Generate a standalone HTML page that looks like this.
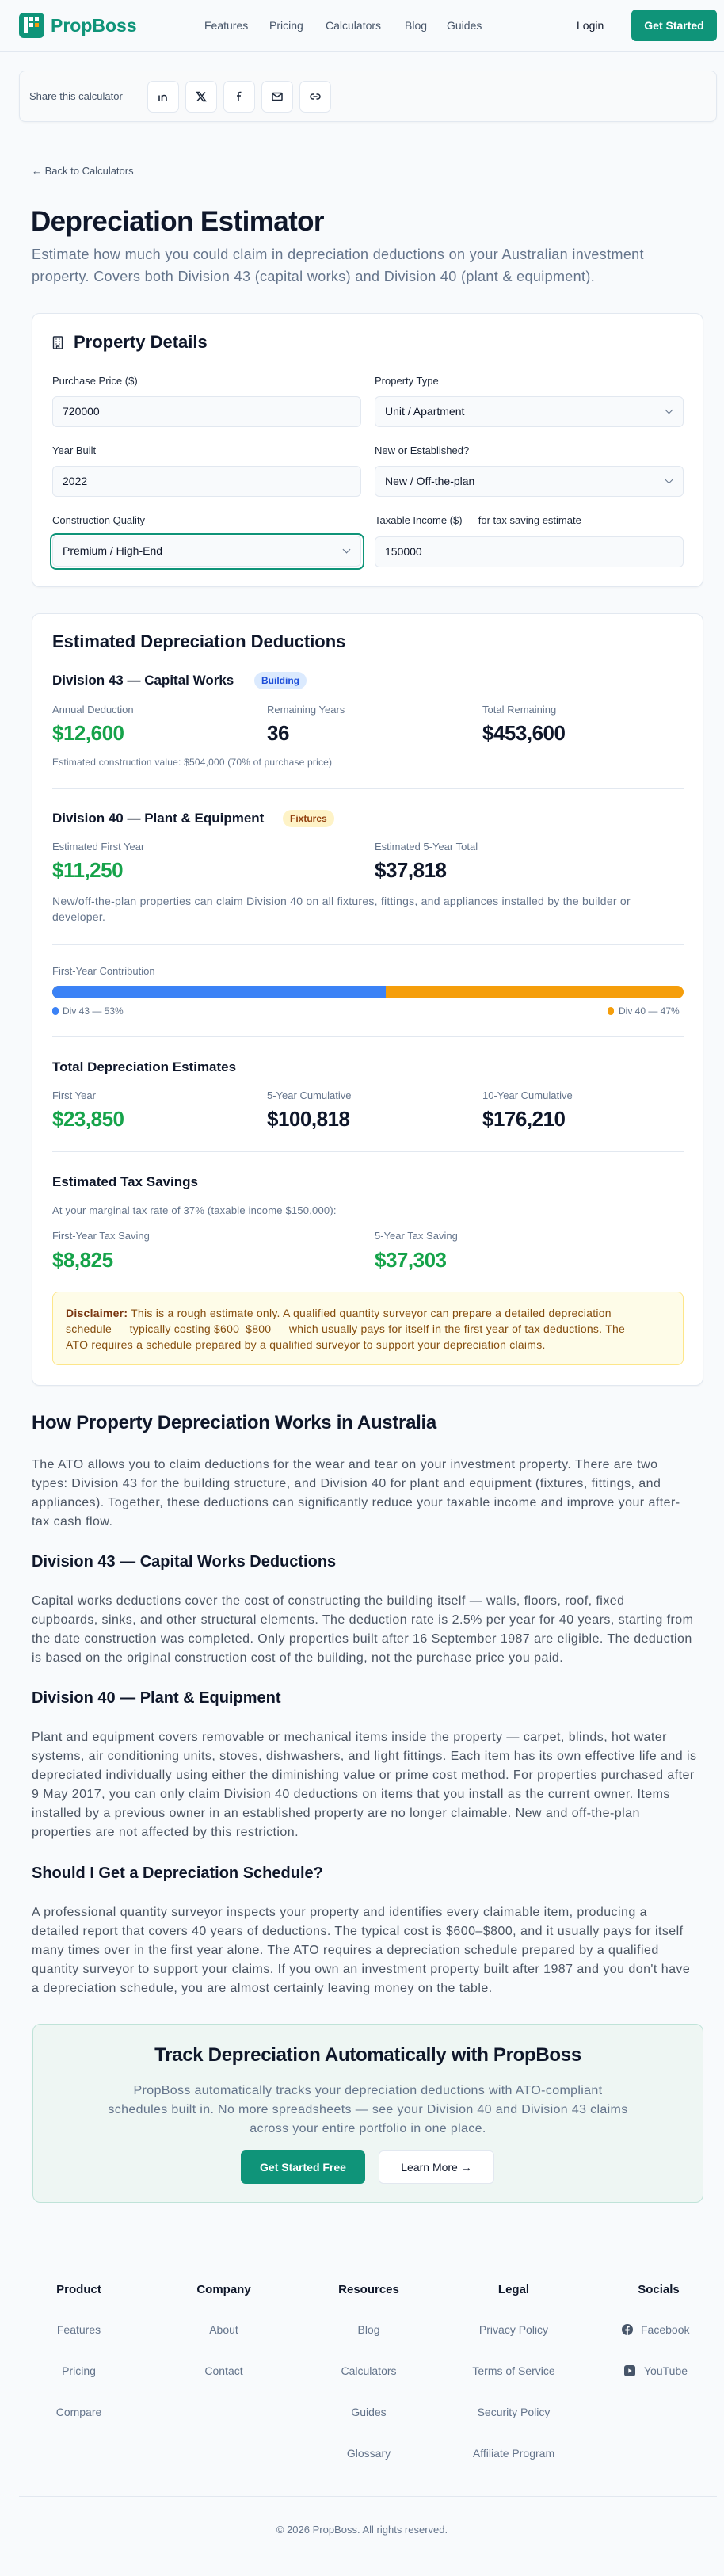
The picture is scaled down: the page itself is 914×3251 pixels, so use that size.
<!DOCTYPE html>
<html><head><meta charset="utf-8">
<style>
*{box-sizing:border-box;margin:0;padding:0}
body{width:914px;height:3251px;background:#f8fafc;font-family:"Liberation Sans",Arial,sans-serif;color:#0f172a;position:relative;overflow:hidden}
.a{position:absolute;white-space:nowrap}
.nav{position:absolute;left:0;top:0;width:914px;height:65px;border-bottom:1px solid #e2e8f0;background:#f8fafc}
.nl{font-size:14px;color:#475569;top:23px;line-height:18px}
.card{position:absolute;left:40px;width:848px;background:#fff;border:1px solid #e2e8f0;border-radius:10px;box-shadow:0 1px 2px rgba(0,0,0,.04)}
.lbl{font-size:13px;color:#1e293b;line-height:16px}
.inp{position:absolute;height:39px;width:390px;background:#f8fafc;border:1px solid #e2e8f0;border-radius:6px;font-size:14px;line-height:37px;padding-left:12px;color:#0f172a}
.chev{position:absolute;right:14px;top:13px;width:7px;height:7px;border-right:1.3px solid #64748b;border-bottom:1.3px solid #64748b;transform:rotate(45deg)}
.ml{font-size:13px;color:#64748b;line-height:16px}
.val{font-size:26px;font-weight:bold;line-height:30px;letter-spacing:-0.5px}
.g{color:#16a34a}
.h3c{font-size:17px;font-weight:bold;line-height:22px}
.div{position:absolute;left:66px;width:797px;height:1px;background:#e2e8f0}
.badge{position:absolute;font-size:12px;line-height:22px;height:22px;border-radius:11px;padding:0 9px;font-weight:bold}
.p{font-size:16px;line-height:24px;color:#4b5563;letter-spacing:0.45px}
.h3{font-size:20px;font-weight:bold;line-height:26px}
.sb{position:absolute;top:102px;width:40px;height:40px;border:1px solid #e2e8f0;border-radius:7px;background:#fff;display:flex;align-items:center;justify-content:center}
.fh{font-size:15px;font-weight:bold;line-height:20px;text-align:center;width:183px}
.fl{font-size:14px;color:#64748b;line-height:18px;text-align:center;width:183px}
</style></head><body>

<div class="nav"></div>
<svg class="a" style="left:24px;top:16px" width="32" height="32" viewBox="0 0 32 32"><rect width="32" height="32" rx="6" fill="#0f9479"/><rect x="6" y="6" width="5" height="20" fill="#fff"/><rect x="13" y="6" width="5" height="5" fill="#fff"/><rect x="13" y="13" width="5" height="5" fill="#fff"/><rect x="20" y="13" width="5" height="5" fill="#f59e0b"/><rect x="20" y="6" width="5" height="5" fill="#fff"/></svg>
<div class="a" style="left:64px;top:18px;font-size:23px;font-weight:bold;color:#0f9479;line-height:28px">PropBoss</div>
<div class="a nl" style="left:258px">Features</div>
<div class="a nl" style="left:340px">Pricing</div>
<div class="a nl" style="left:411px">Calculators</div>
<div class="a nl" style="left:511px">Blog</div>
<div class="a nl" style="left:564px">Guides</div>
<div class="a" style="left:728px;top:23px;font-size:14px;line-height:18px;color:#0f172a;font-weight:500">Login</div>
<div class="a" style="left:797px;top:12px;width:108px;height:40px;background:#0f9479;border-radius:6px;color:#fff;font-size:14px;font-weight:bold;line-height:40px;text-align:center">Get Started</div>

<div class="a" style="left:24px;top:89px;width:881px;height:65px;border:1px solid #e2e8f0;border-radius:8px;background:#f9fafb;box-shadow:0 1px 2px rgba(0,0,0,.04)"></div>
<div class="a" style="left:37px;top:114px;font-size:13px;color:#475569;line-height:16px">Share this calculator</div>
<div class="sb" style="left:186px"><svg width="16" height="16" viewBox="0 0 16 16" fill="none" stroke="#1e293b" stroke-width="1.6"><path d="M3 6.5V13M3 3v.5M6.5 13V6.5M6.5 9.5c0-2 1.2-3 2.7-3S12 7.5 12 9.5V13"/></svg></div>
<div class="sb" style="left:234px"><svg width="16" height="16" viewBox="0 0 16 16" fill="none" stroke="#1e293b" stroke-width="1.5"><path d="M2.5 2.5h3L13.5 13.5h-3zM13 2.5L9 7M3 13.5L7 9"/></svg></div>
<div class="sb" style="left:282px"><svg width="16" height="16" viewBox="0 0 16 16" fill="none" stroke="#1e293b" stroke-width="1.5"><path d="M10.5 2.5H9a2 2 0 0 0-2 2V14M5 7h5"/></svg></div>
<div class="sb" style="left:330px"><svg width="16" height="16" viewBox="0 0 16 16" fill="none" stroke="#1e293b" stroke-width="1.5"><rect x="2" y="3.5" width="12" height="9" rx="1"/><path d="M2.5 4.5l5.5 4 5.5-4"/></svg></div>
<div class="sb" style="left:378px"><svg width="16" height="16" viewBox="0 0 16 16" fill="none" stroke="#1e293b" stroke-width="1.5"><path d="M6.5 5H5a3 3 0 0 0 0 6h1.5M9.5 5H11a3 3 0 0 1 0 6H9.5M5.5 8h5"/></svg></div>

<div class="a" style="left:40px;top:208px;font-size:13px;color:#475569;line-height:16px">← Back to Calculators</div>
<div class="a" style="left:39px;top:259px;font-size:35px;font-weight:bold;line-height:42px;letter-spacing:-0.6px">Depreciation Estimator</div>
<div class="a" style="left:40px;top:307px;font-size:18px;color:#64748b;line-height:28px;letter-spacing:0.35px">Estimate how much you could claim in depreciation deductions on your Australian investment<br>property. Covers both Division 43 (capital works) and Division 40 (plant &amp; equipment).</div>

<!-- Card 1 -->
<div class="card" style="top:395px;height:346px"></div>
<svg class="a" style="left:66px;top:424px" width="14" height="17" viewBox="0 0 14 17" fill="none" stroke="#1e293b" stroke-width="1.4"><rect x="1.5" y="1" width="11" height="15" rx="1"/><path d="M4.5 4h1M8.5 4h1M4.5 7h1M8.5 7h1M4.5 10h1M8.5 10h1M5.5 16v-3h3v3"/></svg>
<div class="a" style="left:93px;top:419px;font-size:22px;font-weight:bold;line-height:26px">Property Details</div>
<div class="a lbl" style="left:66px;top:473px">Purchase Price ($)</div>
<div class="a lbl" style="left:473px;top:473px">Property Type</div>
<div class="inp" style="left:66px;top:500px">720000</div>
<div class="inp" style="left:473px;top:500px">Unit / Apartment<span class="chev"></span></div>
<div class="a lbl" style="left:66px;top:561px">Year Built</div>
<div class="a lbl" style="left:473px;top:561px">New or Established?</div>
<div class="inp" style="left:66px;top:588px">2022</div>
<div class="inp" style="left:473px;top:588px">New / Off-the-plan<span class="chev"></span></div>
<div class="a lbl" style="left:66px;top:649px">Construction Quality</div>
<div class="a lbl" style="left:473px;top:649px">Taxable Income ($) — for tax saving estimate</div>
<div class="a" style="left:63px;top:673px;width:397px;height:46px;border:2px solid #0f9479;border-radius:8px"></div>
<div class="inp" style="left:66px;top:676px">Premium / High-End<span class="chev"></span></div>
<div class="inp" style="left:473px;top:677px">150000</div>

<!-- Card 2 -->
<div class="card" style="top:774px;height:975px"></div>
<div class="a" style="left:66px;top:797px;font-size:22px;font-weight:bold;line-height:26px">Estimated Depreciation Deductions</div>
<div class="a h3c" style="left:66px;top:848px">Division 43 — Capital Works</div>
<div class="badge" style="left:321px;top:848px;background:#dbeafe;color:#1d4ed8">Building</div>
<div class="a ml" style="left:66px;top:888px">Annual Deduction</div>
<div class="a ml" style="left:337px;top:888px">Remaining Years</div>
<div class="a ml" style="left:609px;top:888px">Total Remaining</div>
<div class="a val g" style="left:66px;top:910px">$12,600</div>
<div class="a val" style="left:337px;top:910px">36</div>
<div class="a val" style="left:609px;top:910px">$453,600</div>
<div class="a" style="left:66px;top:955px;font-size:12px;color:#64748b;line-height:15px;letter-spacing:0.2px">Estimated construction value: $504,000 (70% of purchase price)</div>
<div class="div" style="top:995px"></div>

<div class="a h3c" style="left:66px;top:1022px">Division 40 — Plant &amp; Equipment</div>
<div class="badge" style="left:357px;top:1022px;background:#fef3c7;color:#92400e">Fixtures</div>
<div class="a ml" style="left:66px;top:1061px">Estimated First Year</div>
<div class="a ml" style="left:473px;top:1061px">Estimated 5-Year Total</div>
<div class="a val g" style="left:66px;top:1083px">$11,250</div>
<div class="a val" style="left:473px;top:1083px">$37,818</div>
<div class="a" style="left:66px;top:1127px;font-size:14px;color:#64748b;line-height:20px;letter-spacing:0.25px">New/off-the-plan properties can claim Division 40 on all fixtures, fittings, and appliances installed by the builder or<br>developer.</div>
<div class="div" style="top:1191px"></div>

<div class="a ml" style="left:66px;top:1218px">First-Year Contribution</div>
<div class="a" style="left:66px;top:1244px;width:797px;height:16px;border-radius:8px;overflow:hidden;background:#f59e0b"><div style="width:421px;height:16px;background:#3b82f6"></div></div>
<div class="a" style="left:66px;top:1271px;width:8px;height:10px;border-radius:4px;background:#3b82f6"></div>
<div class="a" style="left:79px;top:1269px;font-size:12px;color:#64748b;line-height:15px">Div 43 — 53%</div>
<div class="a" style="left:767px;top:1271px;width:8px;height:10px;border-radius:4px;background:#f59e0b"></div>
<div class="a" style="left:781px;top:1269px;font-size:12px;color:#64748b;line-height:15px">Div 40 — 47%</div>
<div class="div" style="top:1308px"></div>

<div class="a h3c" style="left:66px;top:1336px">Total Depreciation Estimates</div>
<div class="a ml" style="left:66px;top:1375px">First Year</div>
<div class="a ml" style="left:337px;top:1375px">5-Year Cumulative</div>
<div class="a ml" style="left:609px;top:1375px">10-Year Cumulative</div>
<div class="a val g" style="left:66px;top:1397px">$23,850</div>
<div class="a val" style="left:337px;top:1397px">$100,818</div>
<div class="a val" style="left:609px;top:1397px">$176,210</div>
<div class="div" style="top:1453px"></div>

<div class="a h3c" style="left:66px;top:1481px">Estimated Tax Savings</div>
<div class="a ml" style="left:66px;top:1520px;letter-spacing:0.2px">At your marginal tax rate of 37% (taxable income $150,000):</div>
<div class="a ml" style="left:66px;top:1552px">First-Year Tax Saving</div>
<div class="a ml" style="left:473px;top:1552px">5-Year Tax Saving</div>
<div class="a val g" style="left:66px;top:1575px">$8,825</div>
<div class="a val g" style="left:473px;top:1575px">$37,303</div>
<div class="a" style="left:66px;top:1630px;width:797px;height:93px;background:#fefce8;border:1px solid #fde68a;border-radius:8px"></div>
<div class="a" style="left:83px;top:1647px;font-size:14px;line-height:20px;color:#854d0e;letter-spacing:0.25px"><b style="color:#78350f">Disclaimer:</b> This is a rough estimate only. A qualified quantity surveyor can prepare a detailed depreciation<br>schedule — typically costing $600–$800 — which usually pays for itself in the first year of tax deductions. The<br>ATO requires a schedule prepared by a qualified surveyor to support your depreciation claims.</div>

<!-- Article -->
<div class="a" style="left:40px;top:1781px;font-size:24px;font-weight:bold;line-height:30px;letter-spacing:-0.3px">How Property Depreciation Works in Australia</div>
<div class="a p" style="left:40px;top:1837px">The ATO allows you to claim deductions for the wear and tear on your investment property. There are two<br>types: Division 43 for the building structure, and Division 40 for plant and equipment (fixtures, fittings, and<br>appliances). Together, these deductions can significantly reduce your taxable income and improve your after-<br>tax cash flow.</div>
<div class="a h3" style="left:40px;top:1958px">Division 43 — Capital Works Deductions</div>
<div class="a p" style="left:40px;top:2009px">Capital works deductions cover the cost of constructing the building itself — walls, floors, roof, fixed<br>cupboards, sinks, and other structural elements. The deduction rate is 2.5% per year for 40 years, starting from<br>the date construction was completed. Only properties built after 16 September 1987 are eligible. The deduction<br>is based on the original construction cost of the building, not the purchase price you paid.</div>
<div class="a h3" style="left:40px;top:2130px">Division 40 — Plant &amp; Equipment</div>
<div class="a p" style="left:40px;top:2181px">Plant and equipment covers removable or mechanical items inside the property — carpet, blinds, hot water<br>systems, air conditioning units, stoves, dishwashers, and light fittings. Each item has its own effective life and is<br>depreciated individually using either the diminishing value or prime cost method. For properties purchased after<br>9 May 2017, you can only claim Division 40 deductions on items that you install as the current owner. Items<br>installed by a previous owner in an established property are no longer claimable. New and off-the-plan<br>properties are not affected by this restriction.</div>
<div class="a h3" style="left:40px;top:2351px">Should I Get a Depreciation Schedule?</div>
<div class="a p" style="left:40px;top:2402px">A professional quantity surveyor inspects your property and identifies every claimable item, producing a<br>detailed report that covers 40 years of deductions. The typical cost is $600–$800, and it usually pays for itself<br>many times over in the first year alone. The ATO requires a depreciation schedule prepared by a qualified<br>quantity surveyor to support your claims. If you own an investment property built after 1987 and you don't have<br>a depreciation schedule, you are almost certainly leaving money on the table.</div>

<!-- CTA -->
<div class="a" style="left:41px;top:2554px;width:847px;height:226px;background:#eef6f3;border:1px solid #bfe3d8;border-radius:10px"></div>
<div class="a" style="left:41px;top:2579px;width:847px;text-align:center;font-size:24px;font-weight:bold;line-height:30px;letter-spacing:-0.3px">Track Depreciation Automatically with PropBoss</div>
<div class="a" style="left:41px;top:2627px;width:847px;text-align:center;font-size:16px;line-height:24px;color:#64748b;letter-spacing:0.35px">PropBoss automatically tracks your depreciation deductions with ATO-compliant<br>schedules built in. No more spreadsheets — see your Division 40 and Division 43 claims<br>across your entire portfolio in one place.</div>
<div class="a" style="left:304px;top:2714px;width:157px;height:42px;background:#0f9479;border-radius:6px;color:#fff;font-size:14px;font-weight:bold;line-height:42px;text-align:center">Get Started Free</div>
<div class="a" style="left:478px;top:2714px;width:146px;height:42px;background:#fff;border:1px solid #e2e8f0;border-radius:6px;color:#0f172a;font-size:14px;font-weight:500;line-height:40px;text-align:center">Learn More →</div>

<!-- Footer -->
<div class="a" style="left:0;top:2829px;width:914px;height:1px;background:#e2e8f0"></div>
<div class="a fh" style="left:8px;top:2880px">Product</div>
<div class="a fh" style="left:191px;top:2880px">Company</div>
<div class="a fh" style="left:374px;top:2880px">Resources</div>
<div class="a fh" style="left:557px;top:2880px">Legal</div>
<div class="a fh" style="left:740px;top:2880px">Socials</div>
<div class="a fl" style="left:8px;top:2931px">Features</div>
<div class="a fl" style="left:8px;top:2983px">Pricing</div>
<div class="a fl" style="left:8px;top:3035px">Compare</div>
<div class="a fl" style="left:191px;top:2931px">About</div>
<div class="a fl" style="left:191px;top:2983px">Contact</div>
<div class="a fl" style="left:374px;top:2931px">Blog</div>
<div class="a fl" style="left:374px;top:2983px">Calculators</div>
<div class="a fl" style="left:374px;top:3035px">Guides</div>
<div class="a fl" style="left:374px;top:3087px">Glossary</div>
<div class="a fl" style="left:557px;top:2931px">Privacy Policy</div>
<div class="a fl" style="left:557px;top:2983px">Terms of Service</div>
<div class="a fl" style="left:557px;top:3035px">Security Policy</div>
<div class="a fl" style="left:557px;top:3087px">Affiliate Program</div>
<svg class="a" style="left:785px;top:2933px" width="14" height="14" viewBox="0 0 14 14"><circle cx="7" cy="7" r="7" fill="#475569"/><path d="M7.8 14V8.5h1.7l.3-2H7.8V5.3c0-.6.2-1 1-1h1V2.6c-.3 0-.9-.1-1.5-.1-1.4 0-2.4.9-2.4 2.5v1.5H4.3v2h1.6V14z" fill="#fff"/></svg>
<div class="a" style="left:809px;top:2931px;font-size:14px;color:#64748b;line-height:18px">Facebook</div>
<svg class="a" style="left:788px;top:2985px" width="14" height="14" viewBox="0 0 14 14"><rect width="14" height="14" rx="3" fill="#475569"/><path d="M5.3 4.3v5.4L9.7 7z" fill="#fff"/></svg>
<div class="a" style="left:813px;top:2983px;font-size:14px;color:#64748b;line-height:18px">YouTube</div>
<div class="a" style="left:24px;top:3150px;width:881px;height:1px;background:#e2e8f0"></div>
<div class="a" style="left:0;top:3185px;width:914px;text-align:center;font-size:13px;color:#64748b;line-height:16px">© 2026 PropBoss. All rights reserved.</div>
</body></html>
